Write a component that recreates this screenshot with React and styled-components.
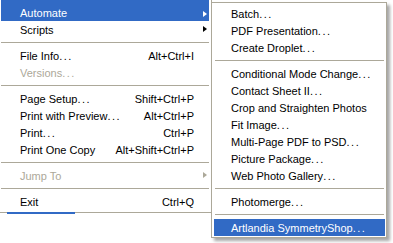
import React from 'react';
import styled, { createGlobalStyle } from 'styled-components';

const GlobalStyle = createGlobalStyle`
  html, body {
    margin: 0;
    padding: 0;
    background: #fff;
    overflow: hidden;
  }
  body {
    font-family: "Liberation Sans", Arial, sans-serif;
    font-size: 11px;
  }
`;

const Stage = styled.div`
  display: flex;
  align-items: flex-start;
  width: 393px;
  height: 243px;
  overflow: hidden;
`;

const Column = styled.div`
  display: flex;
  flex-direction: column;
  margin-left: -2px;
  margin-top: -1px;
`;

const Menu = styled.div`
  background: #fff;
  border: 1px solid #aca899;
  box-sizing: border-box;
  width: ${(p) => p.$width}px;
  padding: ${(p) => p.$padding};
  display: flex;
  flex-direction: column;
`;

const SubMenu = styled(Menu)`
  margin-left: -1px;
  margin-top: 2px;
  box-shadow: 3px 3px 3px rgba(0, 0, 0, 0.35);
  position: relative;
`;

const TaskStrip = styled.div`
  margin-left: 9px;
  margin-top: -1px;
  width: 68px;
  height: 2px;
  background: #316ac5;
`;

const Row = styled.div`
  display: flex;
  align-items: center;
  box-sizing: border-box;
  height: ${(p) => (p.$tall ? 21 : 17)}px;
  padding-top: ${(p) => (p.$tall ? 4 : 0)}px;
  padding-left: ${(p) => p.$indent}px;
  padding-right: 15px;
  background: ${(p) => (p.$active ? '#316ac5' : 'transparent')};
  color: ${(p) => (p.$active ? '#fff' : p.$disabled ? '#aca899' : '#000')};
  white-space: nowrap;
  position: relative;
`;

const Label = styled.span`
  flex: 1;
`;

const Dots = styled.span`
  letter-spacing: 1.5px;
`;

const Shortcut = styled.span`
  text-align: right;
`;

const Arrow = styled.span`
  position: absolute;
  right: 2px;
  top: ${(p) => (p.$tall ? 11 : 5)}px;
  width: 0;
  height: 0;
  border-top: 3.5px solid transparent;
  border-bottom: 3.5px solid transparent;
  border-left: 4px solid ${(p) => p.$color};
`;

const Separator = styled.div`
  height: 9px;
  display: flex;
  align-items: center;
  padding: 0 ${(p) => p.$inset}px;

  &::after {
    content: '';
    flex: 1;
    height: 1px;
    background: #aca899;
  }
`;

const mainItems = [
  { label: 'Automate', sub: true, active: true, tall: true },
  { label: 'Scripts', sub: true },
  { sep: true },
  { label: 'File Info...', key: 'Alt+Ctrl+I' },
  { label: 'Versions...', disabled: true },
  { sep: true },
  { label: 'Page Setup...', key: 'Shift+Ctrl+P' },
  { label: 'Print with Preview...', key: 'Alt+Ctrl+P' },
  { label: 'Print...', key: 'Ctrl+P' },
  { label: 'Print One Copy', key: 'Alt+Shift+Ctrl+P' },
  { sep: true },
  { label: 'Jump To', sub: true, disabled: true },
  { sep: true },
  { label: 'Exit', key: 'Ctrl+Q' },
];

const automateItems = [
  { label: 'Batch...' },
  { label: 'PDF Presentation...' },
  { label: 'Create Droplet...' },
  { sep: true },
  { label: 'Conditional Mode Change...' },
  { label: 'Contact Sheet II...' },
  { label: 'Crop and Straighten Photos' },
  { label: 'Fit Image...' },
  { label: 'Multi-Page PDF to PSD...' },
  { label: 'Picture Package...' },
  { label: 'Web Photo Gallery...' },
  { sep: true },
  { label: 'Photomerge...' },
  { sep: true },
  { label: 'Artlandia SymmetryShop...', active: true },
];

function ItemLabel({ text }) {
  if (!text.endsWith('...')) return <Label>{text}</Label>;
  return (
    <Label>
      {text.slice(0, -3)}
      <Dots>...</Dots>
    </Label>
  );
}

function MenuItems({ items, indent, sepInset }) {
  return items.map((item, i) => {
    if (item.sep) return <Separator key={i} $inset={sepInset} />;
    const arrowColor = item.active ? '#fff' : item.disabled ? '#aca899' : '#000';
    return (
      <Row
        key={i}
        $indent={indent}
        $active={item.active}
        $disabled={item.disabled}
        $tall={item.tall}
      >
        <ItemLabel text={item.label} />
        {item.key && <Shortcut>{item.key}</Shortcut>}
        {item.sub && <Arrow $color={arrowColor} $tall={item.tall} />}
      </Row>
    );
  });
}

export default function App() {
  return (
    <>
      <GlobalStyle />
      <Stage>
        <Column>
          <Menu $width={214} $padding="0 2px 2px 2px">
            <MenuItems items={mainItems} indent={19} sepInset={0} />
          </Menu>
          <TaskStrip />
        </Column>
        <SubMenu $width={176} $padding="2px 1px 1px 2px">
          <MenuItems items={automateItems} indent={17} sepInset={1} />
        </SubMenu>
      </Stage>
    </>
  );
}
